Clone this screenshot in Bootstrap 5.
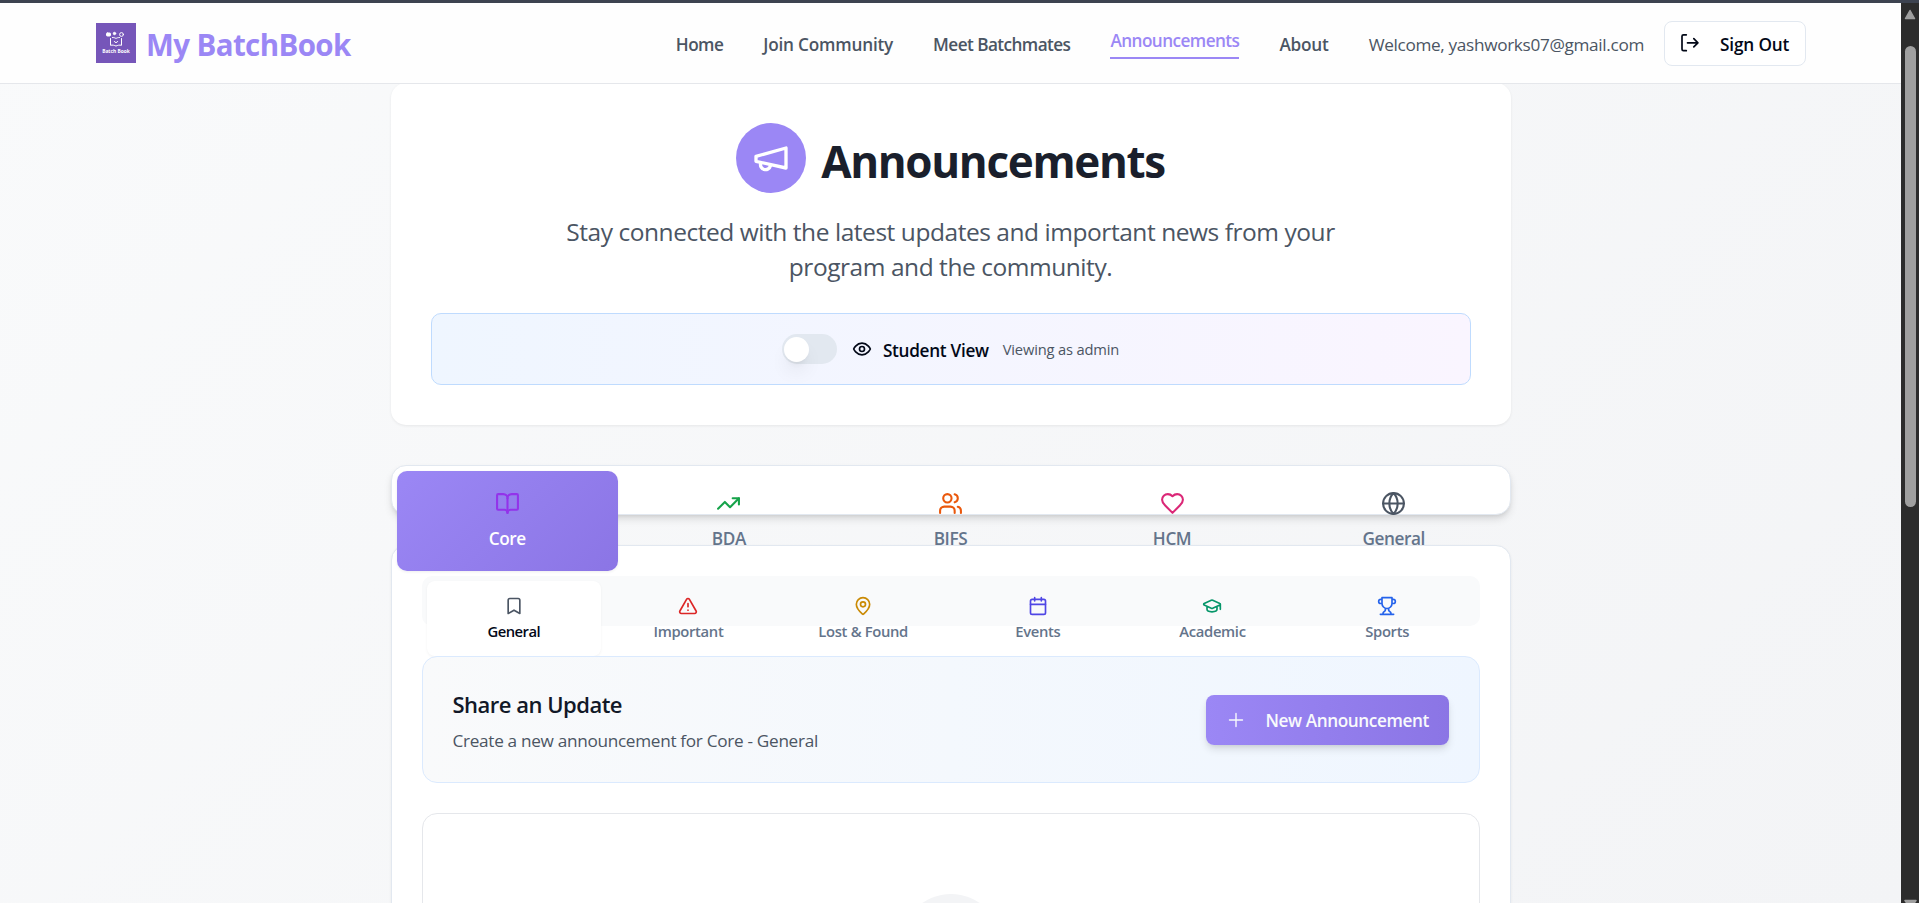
<!DOCTYPE html>
<html lang="en">
<head>
<meta charset="utf-8">
<meta name="viewport" content="width=device-width, initial-scale=1">
<title>My BatchBook - Announcements</title>
<link rel="stylesheet" href="https://cdn.jsdelivr.net/npm/bootstrap@5.3.0/dist/css/bootstrap.min.css">
<style>
  body { font-family: "Open Sans", "Noto Sans", sans-serif; font-size: 17.2px; line-height: 25px; color: #020817; height: 100vh; overflow: hidden; }
  svg { flex: none; display: block; fill: none; stroke: currentColor; stroke-width: 2; stroke-linecap: round; stroke-linejoin: round; }
  .window-edge { height: 3px; background: #3d4350; }
  .viewport { height: calc(100vh - 3px); }
  .page { background: linear-gradient(135deg, #f9fafb, #f3f4f6); overflow: hidden; }
  .fw-mid { font-weight: 550; }

  .site-header { height: 81px; padding: 0 95px 0 96px; background: #fefefe; border-bottom: 1px solid #e5e7eb; position: relative; z-index: 5; }
  .logo { width: 40px; height: 40px; background: #7656b9; stroke: #fff; stroke-width: 1; }
  .brand { font-size: 29.5px; letter-spacing: -.6px; color: #9b87f5; margin-left: 10px; line-height: 40px; padding-top: 3px; }
  .site-nav { gap: 40px; color: #4b5563; }
  .site-nav a { color: inherit; text-decoration: none; padding-top: 3px; letter-spacing: -.57px; white-space: nowrap; }
  .site-nav a.ls-wide { letter-spacing: -.2px; }
  .site-nav a.current { color: #9b87f5; border-bottom: 2px solid #9b87f5; padding: 0 0 4px; }
  .user-name { letter-spacing: -.33px; padding-top: 3px; margin-right: 20px; }
  .sign-out { width: 142px; height: 45px; border: 1px solid #e2e8f0; border-radius: 8px; background: #fff; color: #020817; padding: 0 15px; white-space: nowrap; }
  .sign-out span { margin-left: 20px; padding-top: 3px; letter-spacing: -.15px; }

  .content { width: 1120px; margin: -1px auto 0; }
  .hero { background: #fff; border-radius: 15px; padding: 40px; height: 342px; box-shadow: 0 1px 3px rgba(0,0,0,.07); }
  .hero-icon { width: 70px; height: 70px; background: #9b87f5; color: #fff; }
  .hero h1 { font-size: 44px; line-height: 50px; letter-spacing: -1.33px; color: #1a1f2c; margin: 6px 0 0 15px; }
  .hero p { font-size: 24.5px; line-height: 35px; letter-spacing: -.45px; color: #4b5563; width: 780px; margin: 21px auto 29px; }
  .view-bar { height: 72px; border: 1px solid #bfdbfe; border-radius: 10px; background: linear-gradient(90deg, #eff6ff, #faf5ff); }
  .switch { width: 55px; height: 30px; border-radius: 15px; background: #e2e8f0; padding: 2.5px; margin-right: 15px; }
  .switch i { display: block; width: 25px; height: 25px; border-radius: 50%; background: #fff; box-shadow: 0 12px 19px -4px rgba(0,0,0,.1), 0 5px 7px -5px rgba(0,0,0,.12); }
  .view-name { margin: 2px 14px 0 11px; letter-spacing: -.3px; }
  .view-note { font-size: 14.7px; letter-spacing: -.17px; color: #4b5563; }

  .tabs-main { display: grid; grid-template-columns: repeat(5, 1fr); height: 50px; margin-top: 40px; padding: 5px; border: 1px solid #e2e8f0; border-radius: 15px; background: #fff; box-shadow: 0 5px 8px -1px rgba(0,0,0,.12), 0 2px 5px -2px rgba(0,0,0,.12); color: #64748b; }
  .tab-tile { height: 100px; padding-top: 20px; border-radius: 10px; display: flex; flex-direction: column; align-items: center; gap: 10px; }
  .tab-tile span { letter-spacing: -.4px; }
  .tab-tile.current { position: relative; z-index: 2; color: #fff; background: linear-gradient(135deg, #9b87f5, #8b75e5); box-shadow: 0 1px 3px rgba(0,0,0,.07); }
  .panel { position: relative; z-index: 1; margin-top: 30px; padding: 30px; height: 500px; background: #fff; border: 1px solid #e2e8f0; border-radius: 15px; box-shadow: 0 1px 3px rgba(0,0,0,.06); }
  .tabs-sub { display: grid; grid-template-columns: repeat(6, 1fr); height: 50px; padding: 5px; border-radius: 10px; background: #f9fafb; color: #64748b; font-size: 14.8px; line-height: 20px; }
  .sub-tile { height: 75px; padding-top: 15px; border-radius: 8px; display: flex; flex-direction: column; align-items: center; gap: 5px; letter-spacing: -.34px; }
  .sub-tile.current { background: #fff; color: #020817; box-shadow: 0 1px 3px rgba(0,0,0,.05); letter-spacing: -.5px; }
  .share { margin-top: 30px; height: 127px; padding: 30px; border: 1px solid #dbeafe; border-radius: 15px; background: linear-gradient(90deg, #f9fafb, #eff6ff); position: relative; }
  .share h2 { font-size: 22px; line-height: 35px; letter-spacing: -.5px; margin: 0 0 6px; color: #111827; }
  .share p { letter-spacing: -.31px; color: #4b5563; margin: 0; }
  .new-btn { width: 243px; height: 50px; border-radius: 8px; color: #f8fafc; padding: 0 20px; background: linear-gradient(90deg, #9b87f5, #8b75e5); box-shadow: 0 5px 8px -1px rgba(0,0,0,.12), 0 2px 5px -2px rgba(0,0,0,.1); letter-spacing: -.4px; white-space: nowrap; }
  .new-btn span { margin-left: 20px; padding-top: 2px; }
  .feed { margin-top: 30px; height: 300px; padding-top: 80px; border: 1px solid #e5e7eb; border-radius: 15px; }
  .feed i { display: block; width: 100px; height: 100px; margin: auto; border-radius: 50%; background: #f3f4f6; }

  .c-purple { color: #9333ea; } .c-green { color: #16a34a; } .c-orange { color: #ea580c; } .c-pink { color: #db2777; }
  .c-gray { color: #4b5563; } .c-red { color: #dc2626; } .c-yellow { color: #ca8a04; } .c-indigo { color: #4f46e5; }
  .c-teal { color: #059669; } .c-blue { color: #2563eb; }
  .thin { stroke-width: 1.4; } .semi-thin { stroke-width: 1.7; }

  .scroll-track { width: 18px; background: #2c2c2c; padding-top: 6px; overflow: hidden; }
  .scroll-track svg { fill: #9f9f9f; stroke: #9f9f9f; stroke-width: 1.5; }
  .scroll-thumb { width: 11px; height: 461px; margin: 26px 0 392px 1px; border-radius: 6px; background: #9f9f9f; flex: none; }
</style>
</head>
<body>
<div class="window-edge"></div>
<div class="viewport d-flex">
  <div class="page flex-grow-1">
    <header class="site-header d-flex align-items-center justify-content-between">
      <div class="d-flex align-items-center">
        <svg class="logo" viewBox="0 0 40 40">
          <rect x="10.5" y="10" width="4" height="3" rx=".8" fill="#fff"/>
          <circle cx="18.5" cy="10.5" r="1.2" fill="#fff"/>
          <circle cx="25.5" cy="11.5" r="1.9"/>
          <path d="M14.5 15.5v6.8c2-.5 4 0 5.500 .8 1.500-.8 3.500-1.300 5.500-.8v-6.800M16.500 14.500c1.500 0 2.500 .3 3.500 1 1-.7 2-1 3.500-1M18.300 18.500c.5 1.500 2.900 1.500 3.400 0"/>
          <text x="20" y="29.700" text-anchor="middle" font-family="Open Sans" font-size="4.900" font-weight="700" fill="#fff" stroke="none">Batch Book</text>
        </svg>
        <span class="brand fw-bold">My BatchBook</span>
      </div>
      <div class="d-flex align-items-center">
        <nav class="site-nav d-flex align-items-center">
          <a class="fw-mid" href="#">Home</a>
          <a class="fw-mid ls-wide" href="#">Join Community</a>
          <a class="fw-mid" href="#">Meet Batchmates</a>
          <a class="fw-mid current" href="#">Announcements</a>
          <a class="fw-mid ls-wide" href="#">About</a>
          <span class="user-name">Welcome, yashworks07@gmail.com</span>
        </nav>
        <button class="sign-out fw-mid d-flex align-items-center">
          <svg class="semi-thin" width="20" height="20" viewBox="0 0 20 20"><path d="M6.300 1.800H3.500Q2 1.800 2 3.300V16.200Q2 17.700 3.500 17.700H6.300M7.500 9.800H17.800M13.800 5.700l4.100 4.100-4.100 4.100"/></svg>
          <span>Sign Out</span>
        </button>
      </div>
    </header>

    <main class="content">
      <section class="hero">
        <div class="d-flex justify-content-center align-items-center">
          <div class="hero-icon rounded-circle d-flex align-items-center justify-content-center">
            <svg width="40" height="40" viewBox="0 0 24 24"><path d="m3 11 18-5v12L3 14v-3z"/><path d="M11.600 16.800a3 3 0 1 1-5.800-1.600"/></svg>
          </div>
          <h1 class="fw-bold">Announcements</h1>
        </div>
        <p class="text-center">Stay connected with the latest updates and important news from your<br>program and the community.</p>
        <div class="view-bar d-flex align-items-center justify-content-center">
          <div class="switch"><i></i></div>
          <svg width="20" height="20" viewBox="0 0 24 24"><path d="M2 12s3-7 10-7 10 7 10 7-3 7-10 7-10-7-10-7Z"/><circle cx="12" cy="12" r="3"/></svg>
          <span class="view-name fw-mid">Student View</span>
          <span class="view-note">Viewing as admin</span>
        </div>
      </section>

      <div class="tabs-main fw-mid">
        <div class="tab-tile current"><svg class="c-purple" width="25" height="25" viewBox="0 0 24 24"><path d="M12 7v14"/><path d="M3 18a1 1 0 0 1-1-1V4a1 1 0 0 1 1-1h5a4 4 0 0 1 4 4 4 4 0 0 1 4-4h5a1 1 0 0 1 1 1v13a1 1 0 0 1-1 1h-6a3 3 0 0 0-3 3 3 3 0 0 0-3-3z"/></svg><span>Core</span></div>
        <div class="tab-tile"><svg class="c-green" width="25" height="25" viewBox="0 0 24 24"><path d="m22 7-8.500 8.500-5-5L2 17"/><path d="M16 7h6v6"/></svg><span>BDA</span></div>
        <div class="tab-tile"><svg class="c-orange" width="25" height="25" viewBox="0 0 24 24"><path d="M16 21v-2a4 4 0 0 0-4-4H6a4 4 0 0 0-4 4v2"/><circle cx="9" cy="7" r="4"/><path d="M22 21v-2a4 4 0 0 0-3-3.870M16 3.130a4 4 0 0 1 0 7.750"/></svg><span>BIFS</span></div>
        <div class="tab-tile"><svg class="c-pink" width="25" height="25" viewBox="0 0 24 24"><path d="M19 14c1.490-1.460 3-3.210 3-5.500A5.500 5.500 0 0 0 16.500 3c-1.760 0-3 .5-4.500 2-1.500-1.500-2.740-2-4.500-2A5.500 5.500 0 0 0 2 8.500c0 2.300 1.500 4.050 3 5.500l7 7Z"/></svg><span>HCM</span></div>
        <div class="tab-tile"><svg class="c-gray" width="25" height="25" viewBox="0 0 24 24"><circle cx="12" cy="12" r="10"/><path d="M12 2a14.500 14.500 0 0 0 0 20 14.500 14.500 0 0 0 0-20M2 12h20"/></svg><span>General</span></div>
      </div>

      <section class="panel">
        <div class="tabs-sub fw-mid">
          <div class="sub-tile current"><svg class="c-gray" width="20" height="20" viewBox="0 0 24 24"><path d="m19 21-7-4-7 4V5a2 2 0 0 1 2-2h10a2 2 0 0 1 2 2v16z"/></svg><span>General</span></div>
          <div class="sub-tile"><svg class="c-red" width="20" height="20" viewBox="0 0 24 24"><path d="m21.730 18-8-14a2 2 0 0 0-3.480 0l-8 14A2 2 0 0 0 4 21h16a2 2 0 0 0 1.730-3M12 9v4M12 17h.01"/></svg><span>Important</span></div>
          <div class="sub-tile"><svg class="c-yellow" width="20" height="20" viewBox="0 0 24 24"><path d="M20 10c0 4.993-5.539 10.193-7.399 11.799a1 1 0 0 1-1.202 0C9.539 20.193 4 14.993 4 10a8 8 0 0 1 16 0"/><circle cx="12" cy="10" r="3"/></svg><span>Lost &amp; Found</span></div>
          <div class="sub-tile"><svg class="c-indigo" width="20" height="20" viewBox="0 0 24 24"><path d="M8 2v4M16 2v4M3 10h18"/><rect width="18" height="18" x="3" y="4" rx="2"/></svg><span>Events</span></div>
          <div class="sub-tile"><svg class="c-teal" width="20" height="20" viewBox="0 0 24 24"><path d="M21.420 10.922a1 1 0 0 0-.019-1.838L12.830 5.180a2 2 0 0 0-1.660 0L2.600 9.080a1 1 0 0 0 0 1.832l8.570 3.908a2 2 0 0 0 1.660 0zM22 10v6M6 12.500V16a6 3 0 0 0 12 0v-3.500"/></svg><span>Academic</span></div>
          <div class="sub-tile"><svg class="c-blue" width="20" height="20" viewBox="0 0 24 24"><path d="M6 9H4.500a2.500 2.500 0 0 1 0-5H6M18 9h1.500a2.500 2.500 0 0 0 0-5H18M4 22h16M10 14.660V17c0 .550-.470.980-.970 1.210C7.850 18.750 7 20.240 7 22M14 14.660V17c0 .550.470.980.970 1.210C16.150 18.750 17 20.240 17 22M18 2H6v7a6 6 0 0 0 12 0V2Z"/></svg><span>Sports</span></div>
        </div>
        <div class="share d-flex justify-content-between align-items-center">
          <div>
            <h2 class="fw-mid">Share an Update</h2>
            <p>Create a new announcement for Core - General</p>
          </div>
          <button class="new-btn border-0 fw-mid d-flex align-items-center">
            <svg class="thin" width="20" height="20" viewBox="0 0 20 20"><path d="M10 3.500v13M3.500 10h13"/></svg>
            <span>New Announcement</span>
          </button>
        </div>
        <div class="feed"><i></i></div>
      </section>
    </main>
  </div>
  <div class="scroll-track flex-shrink-0 d-flex flex-column align-items-center">
    <svg width="12" height="11" viewBox="0 0 12 11"><path d="M6 1.500 10.500 9.500H1.500Z"/></svg>
    <div class="scroll-thumb"></div>
    <svg width="13" height="11" viewBox="0 0 13 11"><path d="M1 1.500H12L6.500 9.500Z"/></svg>
  </div>
</div>
<script src="https://cdn.jsdelivr.net/npm/bootstrap@5.3.0/dist/js/bootstrap.bundle.min.js"></script>
</body>
</html>
